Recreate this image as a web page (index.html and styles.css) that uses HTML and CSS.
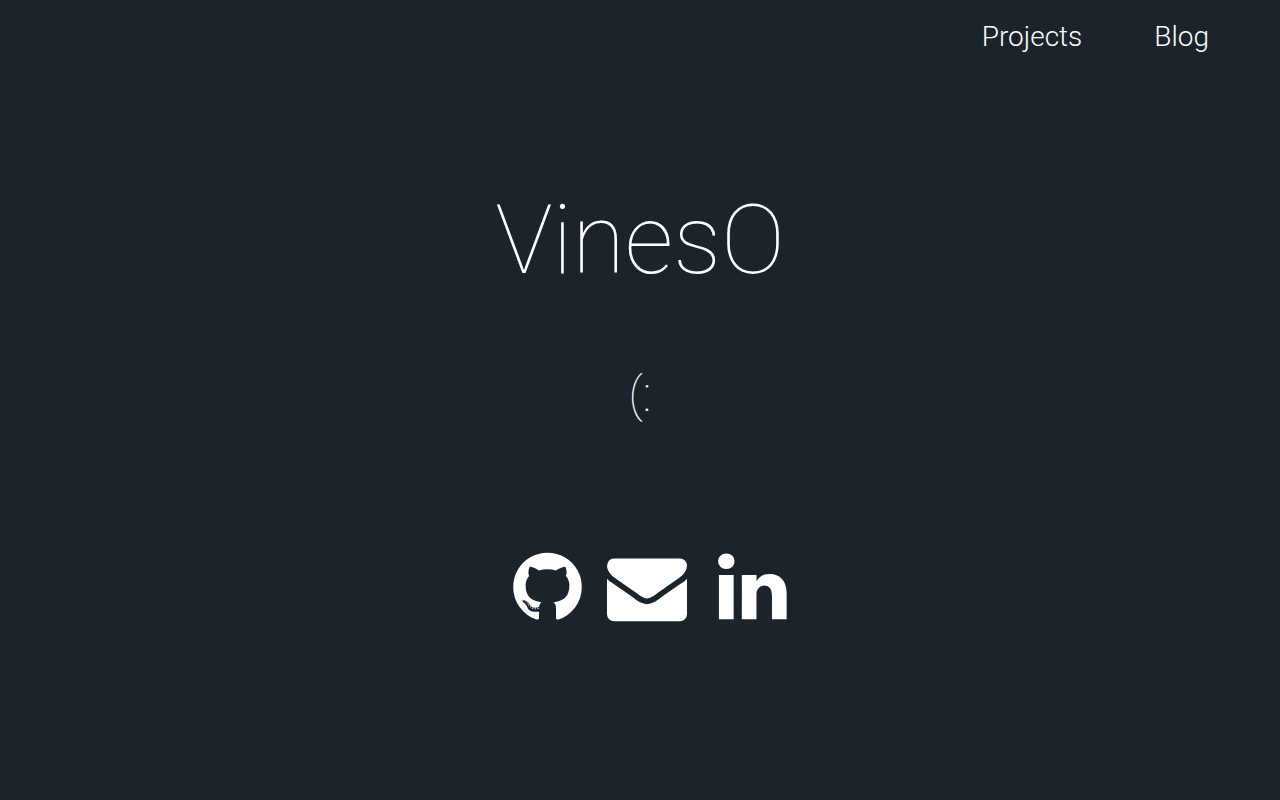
FILE: index.html
```
<!DOCTYPE html>
<html lang="en">
    <head>
        <title>VinesO</title>
        <meta charset="UTF-8">
        <meta name="viewport" content="width=device-width, initial-scale=1">
        <link rel="stylesheet" href="styles.css">
    </head>
    <body>
        <nav class="nav">
            <a href="#projects">Projects</a>
            <a href="#blog">Blog</a>
        </nav>
        <main class="main">
            <h1 class="title">VinesO</h1>
            <p class="smile">(:</p>
            <div class="social">
                <a href="#github" aria-label="GitHub">
                    <svg class="icon github" viewBox="128 0 1536 1792"><path d="M896 128q209 0 385.500 103t279.500 279.500 103 385.500q0 251-146.500 451.500t-378.500 277.500q-27 5-40-7t-13-30q0-3 .5-76.500t.5-134.500q0-97-52-142 57-6 102.500-18t94-39 81-66.500 53-105 20.500-150.500q0-119-79-206 37-91-8-204-28-9-81 11t-92 44l-38 24q-93-26-192-26t-192 26q-16-11-42.500-27t-83.500-38.500-85-13.500q-45 113-8 204-79 87-79 206 0 85 20.500 150t52.500 105 80.500 67 94 39 102.500 18q-39 36-49 103-21 10-45 15t-57 5-65.500-21.500-55.500-62.500q-19-32-48.500-52t-49.500-24l-20-3q-21 0-29 4.500t-5 11.500 9 14 13 12l7 5q22 10 43.500 38t31.500 51l10 23q13 38 44 61.500t67 30 69.500 7 55.500-3.500l23-4q0 38 .5 88.500t.5 54.500q0 18-13 30t-40 7q-232-77-378.500-277.500t-146.500-451.500q0-209 103-385.500t279.500-279.500 385.500-103zm-477 1103q3-7-7-12-10-3-13 2-3 7 7 12 9 6 13-2zm31 34q7-5-2-16-10-9-16-3-7 5 2 16 10 10 16 3zm30 45q9-7 0-19-8-13-17-6-9 5 0 18t17 7zm42 42q8-8-4-19-12-12-20-3-9 8 4 19 12 12 20 3zm57 25q3-11-13-16-15-4-19 7t13 15q15 6 19-6zm63 5q0-13-17-11-16 0-16 11 0 13 17 11 16 0 16-11zm58-10q-2-11-18-9-16 3-14 15t18 8 14-14z"/></svg>
                </a>
                <a href="#mail" aria-label="Email">
                    <svg class="icon mail" viewBox="0 0 1792 1792"><path d="M1792 710v794q0 66-47 113t-113 47h-1472q-66 0-113-47t-47-113v-794q44 49 101 87 362 246 497 345 57 42 92.500 65.500t94.500 48 110 24.500h2q51 0 110-24.500t94.500-48 92.500-65.500q170-123 498-345 57-39 100-87zm0-294q0 79-49 151t-122 123q-376 261-468 325-10 7-42.500 31t-54 38.500-52 32.500-57.500 27-50 9h-2q-23 0-50-9t-57.500-27-52-32.500-54-38.500-42.500-31q-91-64-262-182.500t-205-142.500q-62-42-117-115.500t-55-136.500q0-78 41.500-130t118.500-52h1472q65 0 112.500 47t47.500 113z"/></svg>
                </a>
                <a href="#linkedin" aria-label="LinkedIn">
                    <svg class="icon linkedin" viewBox="0 0 1664 1792"><path d="M477 625v991h-330v-991h330zm21-306q1 73-50.500 122t-135.500 49h-2q-82 0-132-49t-50-122q0-74 51.500-122.500t134.500-48.500 133 48.500 51 122.500zm1166 729v568h-329v-530q0-105-40.500-164.500t-126.500-59.500q-63 0-105.500 34.500t-63.500 85.500q-11 30-11 81v553h-329q2-399 2-647t-1-296l-1-48h329v144h-2q20-32 41-56t56.500-52 87-43.500 114.500-15.500q171 0 275 113.500t104 332.500z"/></svg>
                </a>
            </div>
        </main>
    </body>
</html>
```
FILE: styles.css
```
body,h1,p{margin: 0;padding: 0}
a{color: #fff;text-decoration: none}

body{background: #1b232b;color: #fff;font-family: Roboto, sans-serif}

.nav{display: flex;justify-content: flex-end;gap: 72px;padding: 21px 71px 0;
font-size: 28px;font-weight: 300;line-height: 32px}
.nav a:hover{text-decoration: underline}

.main{display: flex;flex-direction: column;align-items: center;padding-top: 131px}
.title{font-size: 96px;font-weight: 100;line-height: 112px}
.smile{font-size: 48px;font-weight: 100;line-height: 56px;margin-top: 71px}

.social{display: flex;gap: 25px;padding-left: 19px;margin-top: 124px}
.social a:hover{opacity: .8}
.icon{display: block;height: 80px;fill: #fff}
.github{width: 69px}
.mail{width: 80px}
.linkedin{width: 75px}
```
